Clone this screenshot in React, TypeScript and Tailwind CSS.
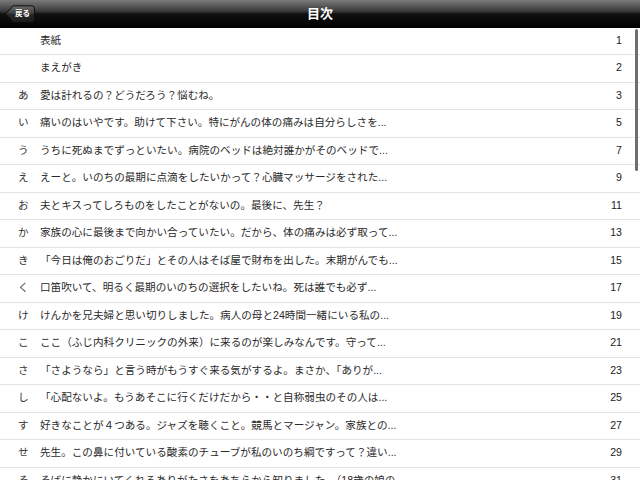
const entries = [
  { kana: "", title: "表紙", page: 1 },
  { kana: "", title: "まえがき", page: 2 },
  { kana: "あ", title: "愛は計れるの？どうだろう？悩むね。", page: 3 },
  { kana: "い", title: "痛いのはいやです。助けて下さい。特にがんの体の痛みは自分らしさを...", page: 5 },
  { kana: "う", title: "うちに死ぬまでずっといたい。病院のベッドは絶対誰かがそのベッドで...", page: 7 },
  { kana: "え", title: "えーと。いのちの最期に点滴をしたいかって？心臓マッサージをされた...", page: 9 },
  { kana: "お", title: "夫とキスってしろものをしたことがないの。最後に、先生？", page: 11 },
  { kana: "か", title: "家族の心に最後まで向かい合っていたい。だから、体の痛みは必ず取って...", page: 13 },
  { kana: "き", title: "「今日は俺のおごりだ」とその人はそば屋で財布を出した。末期がんでも...", page: 15 },
  { kana: "く", title: "口笛吹いて、明るく最期のいのちの選択をしたいね。死は誰でも必ず...", page: 17 },
  { kana: "け", title: "けんかを兄夫婦と思い切りしました。病人の母と24時間一緒にいる私の...", page: 19 },
  { kana: "こ", title: "ここ（ふじ内科クリニックの外来）に来るのが楽しみなんです。守って...", page: 21 },
  { kana: "さ", title: "「さようなら」と言う時がもうすぐ来る気がするよ。まさか、「ありが...", page: 23 },
  { kana: "し", title: "「心配ないよ。もうあそこに行くだけだから・・と自称弱虫のその人は...", page: 25 },
  { kana: "す", title: "好きなことが４つある。ジャズを聴くこと。競馬とマージャン。家族との...", page: 27 },
  { kana: "せ", title: "先生。この鼻に付いている酸素のチューブが私のいのち綱ですって？違い...", page: 29 },
  { kana: "そ", title: "そばに静かにいてくれるありがたさをあちらから知りました。（18歳の娘の...", page: 31 },
];

function BackButton() {
  return (
    <div className="relative flex h-[18px] w-[30px] items-center justify-center pl-[5px]">
      <svg className="absolute inset-0" width="30" height="18" viewBox="0 0 30 18">
        <defs>
          <linearGradient id="bb" x1="0" y1="0" x2="0" y2="1">
            <stop offset="0" stopColor="#6a6a6a" />
            <stop offset="0.5" stopColor="#3a3a3a" />
            <stop offset="0.52" stopColor="#262626" />
            <stop offset="1" stopColor="#1c1c1c" />
          </linearGradient>
        </defs>
        <path
          d="M0.5 9 L8 0.8 H26.5 Q29.5 0.8 29.5 3.8 V14.2 Q29.5 17.2 26.5 17.2 H8 Z"
          fill="url(#bb)"
          stroke="#0d0d0d"
          strokeWidth="1"
        />
      </svg>
      <span className="relative text-[7.5px] font-bold leading-none text-white">戻る</span>
    </div>
  );
}

export default function App() {
  return (
    <div
      className="relative h-[480px] w-[640px] overflow-hidden bg-white"
      style={{ fontFamily: '"Liberation Sans", "Noto Sans CJK JP", sans-serif' }}
    >
      <div className="relative flex h-[27.5px] items-center justify-center bg-[linear-gradient(to_bottom,#7a7a7a_0%,#3a3a3a_40%,#111_50%,#000_100%)]">
        <div className="absolute left-[5px] top-[5px]">
          <BackButton />
        </div>
        <span className="text-[13px] font-bold text-white">目次</span>
      </div>

      <div className="flex flex-col">
        {entries.map((e) => (
          <div
            key={e.page}
            className="flex h-[27.5px] shrink-0 items-center border-b border-[#e3e3e3] text-[10.6px] text-[#2a2a2a]"
          >
            <span className="w-[40px] shrink-0 pl-[18px] text-[#333]">{e.kana}</span>
            <span className="flex-1 whitespace-nowrap">{e.title}</span>
            <span className="pr-[18px] text-[10.6px] text-[#222]">{e.page}</span>
          </div>
        ))}
      </div>

      <div className="absolute left-[635px] top-[29px] h-[142px] w-[3px] rounded-full bg-[#6e6e6e]" />
    </div>
  );
}
